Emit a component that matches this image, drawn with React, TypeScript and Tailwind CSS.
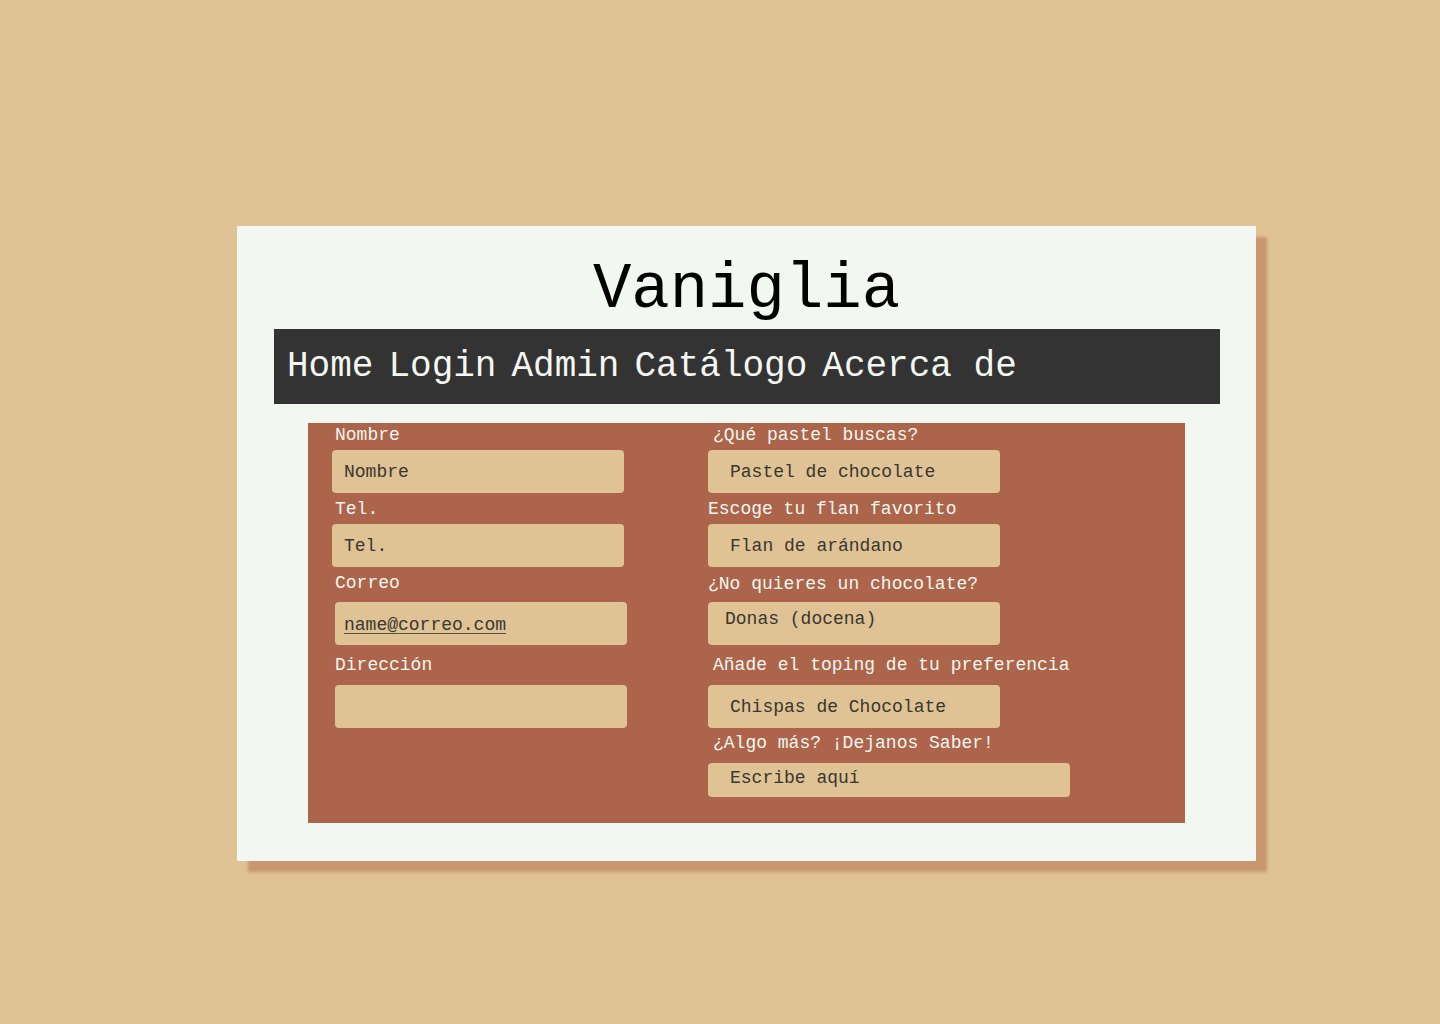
const mono = "font-['Liberation_Mono','Courier_New',monospace]"

function Label({ children, className = "" }: { children: React.ReactNode; className?: string }) {
  return <label className={`block h-[20px] leading-[20px] text-[#f3f7f1] whitespace-nowrap ${className}`}>{children}</label>
}

function Box({ children, className = "" }: { children?: React.ReactNode; className?: string }) {
  return (
    <div className={`flex h-[43px] w-[292px] items-center rounded-[4px] bg-[#dfc394] leading-[20px] text-[#3a3631] ${className}`}>
      {children}
    </div>
  )
}

export default function App() {
  return (
    <div className={`min-h-[1024px] w-full overflow-hidden bg-[#dfc394] pt-[226px] pl-[237px] ${mono}`}>
      <div className="w-[1019px] bg-[#f3f7f1] px-[37px] pt-[28px] pb-[38px] shadow-[11px_11px_3px_#c99670]">
        <h1 className="text-center text-[64px] leading-[73px] text-black">Vaniglia</h1>

        <nav className="mt-[2px] flex h-[75px] w-[946px] items-center gap-[15px] bg-[#333333] pl-[13px] text-[36px] text-[#f3f7f1]">
          <a>Home</a>
          <a>Login</a>
          <a>Admin</a>
          <a>Catálogo</a>
          <a>Acerca de</a>
        </nav>

        <form className="mt-[19px] ml-[34px] flex h-[400px] w-[877px] bg-[#ac644a] pt-[2px] pl-[24px] text-[18px]">
          {/* datos del cliente */}
          <div className="flex w-[376px] flex-col">
            <Label className="ml-[3px]">Nombre</Label>
            <Box className="mt-[5px] pt-[1px] pl-[12px]">Nombre</Box>
            <Label className="mt-[6px] ml-[3px]">Tel.</Label>
            <Box className="mt-[5px] pt-[1px] pl-[12px]">Tel.</Box>
            <Label className="mt-[6px] ml-[3px]">Correo</Label>
            <Box className="mt-[9px] ml-[3px] pt-[3px] pl-[9px]">
              <span className="underline decoration-[#5a5244] underline-offset-[3px]">name@correo.com</span>
            </Box>
            <Label className="mt-[10px] ml-[3px]">Dirección</Label>
            <Box className="mt-[10px] ml-[3px]" />
          </div>

          {/* pedido */}
          <div className="flex flex-col">
            <Label className="ml-[5px]">¿Qué pastel buscas?</Label>
            <Box className="mt-[5px] pt-[1px] pl-[22px]">Pastel de chocolate</Box>
            <Label className="mt-[6px]">Escoge tu flan favorito</Label>
            <Box className="mt-[5px] pl-[22px]">Flan de arándano</Box>
            <Label className="mt-[7px]">¿No quieres un chocolate?</Label>
            <div className="mt-[8px] h-[43px] w-[292px] rounded-[4px] bg-[#dfc394] pt-[7px] pl-[17px] leading-[20px] text-[#3a3631]">
              Donas (docena)
            </div>
            <Label className="mt-[10px] ml-[5px]">Añade el toping de tu preferencia</Label>
            <Box className="mt-[10px] pl-[22px]">Chispas de Chocolate</Box>
            <Label className="mt-[5px] ml-[5px]">¿Algo más? ¡Dejanos Saber!</Label>
            <textarea
              rows={1}
              placeholder="Escribe aquí"
              className="mt-[10px] h-[34px] w-[362px] resize-none rounded-[4px] bg-[#dfc394] pt-[5px] pl-[22px] leading-[20px] text-[#3a3631] outline-none placeholder:text-[#3a3631]"
            />
          </div>
        </form>
      </div>
    </div>
  )
}
